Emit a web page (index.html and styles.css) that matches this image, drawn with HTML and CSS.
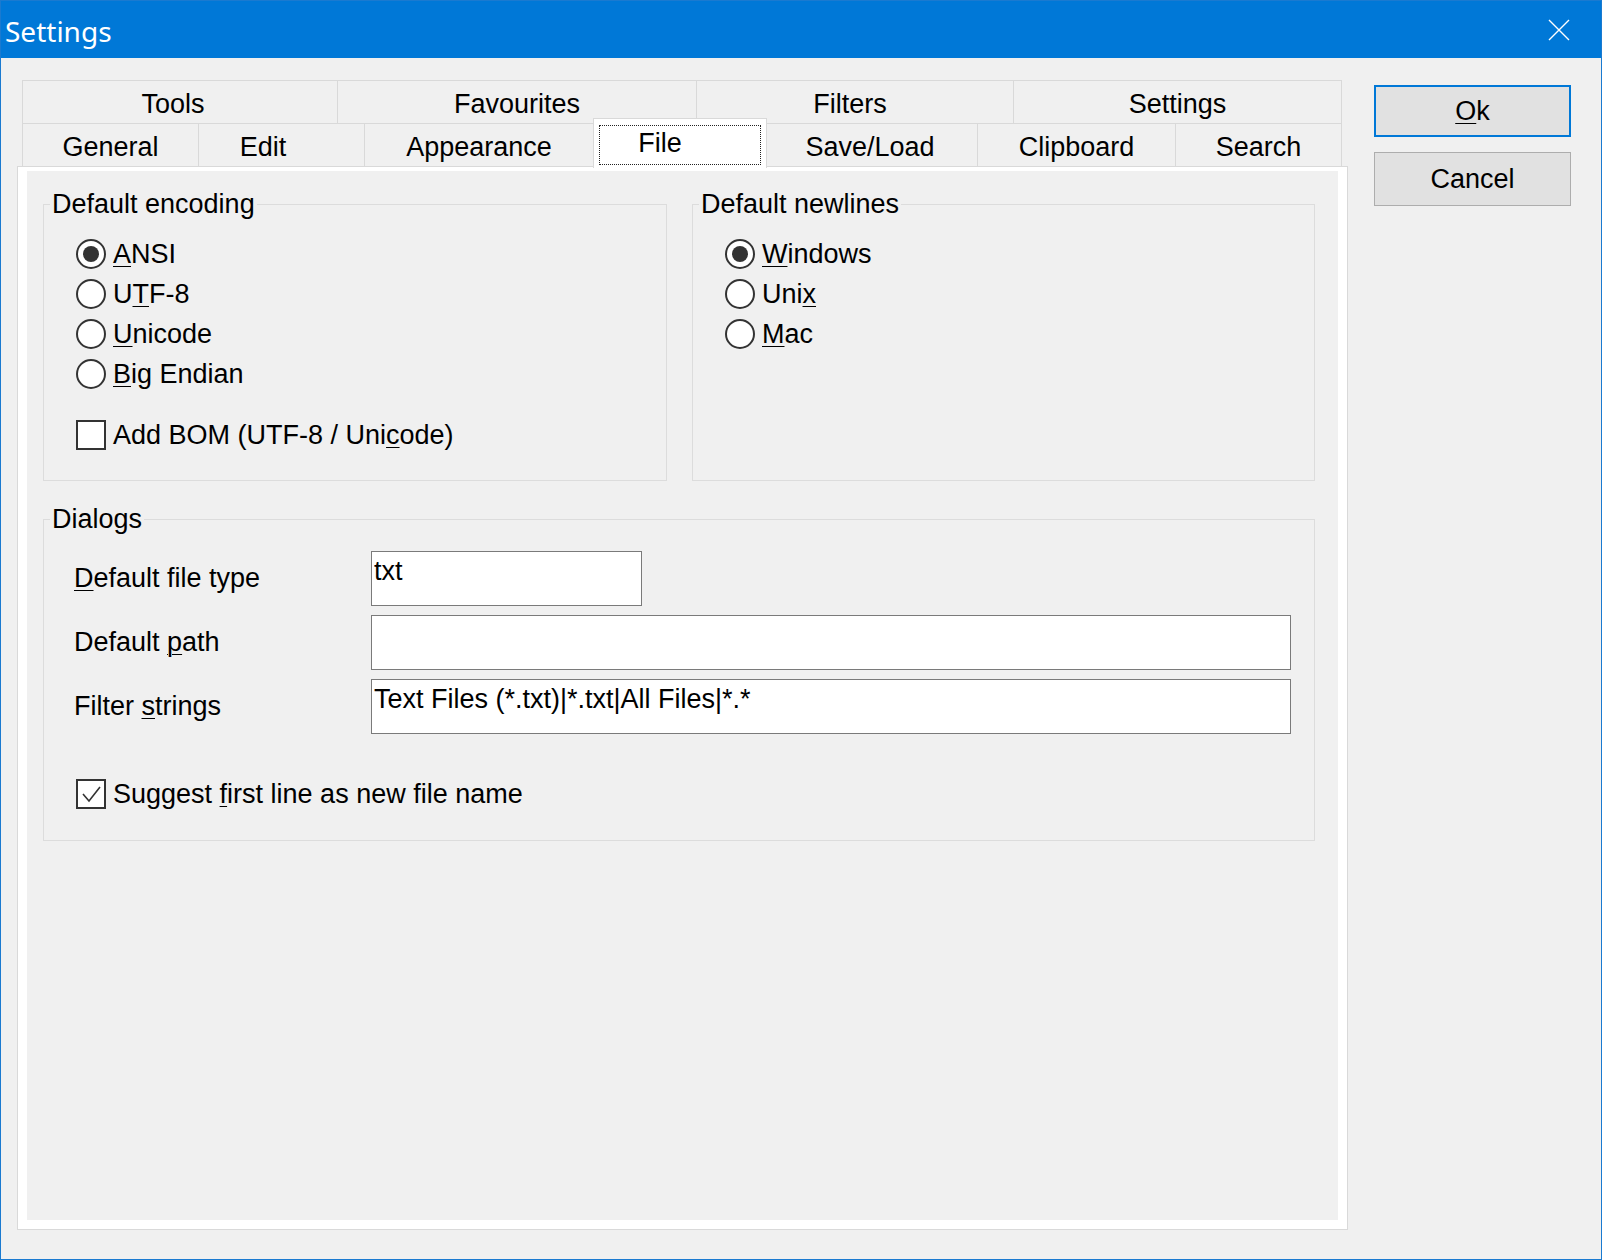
FILE: index.html
```html
<!DOCTYPE html>
<html>
<head>
<title>Settings</title>
<link rel="stylesheet" href="styles.css">
</head>
<body>
<div class="window">
  <div class="titlebar">
    <span class="title">Settings</span>
    <svg class="close-x" width="22" height="22" viewBox="0 0 22 22"><path d="M1 1 L21 21 M21 1 L1 21" stroke="#fff" stroke-width="1.4" fill="none"/></svg>
  </div>

  <div class="client">
    <div class="tabctl">
      <div class="tab-head">
        <div class="tab-row">
          <div class="tab first t-tools">Tools</div>
          <div class="tab t-fav">Favourites</div>
          <div class="tab t-filters">Filters</div>
          <div class="tab t-settings">Settings</div>
        </div>
        <div class="tab-row">
          <div class="tab first t-general">General</div>
          <div class="tab t-edit">Edit</div>
          <div class="tab t-appearance">Appearance</div>
          <div class="tab active t-file"><span class="focus">File</span></div>
          <div class="tab t-saveload">Save/Load</div>
          <div class="tab t-clipboard">Clipboard</div>
          <div class="tab t-search">Search</div>
        </div>
      </div>

      <div class="tab-body">
        <div class="page">
          <div class="group-row">
            <fieldset class="group encoding">
              <legend>Default encoding</legend>
              <div class="opt"><span class="radio on"></span><span><u>A</u>NSI</span></div>
              <div class="opt"><span class="radio"></span><span>U<u>T</u>F-8</span></div>
              <div class="opt"><span class="radio"></span><span><u>U</u>nicode</span></div>
              <div class="opt"><span class="radio"></span><span><u>B</u>ig Endian</span></div>
              <div class="opt bom"><span class="check"></span><span>Add BOM (UTF-8 / Uni<u>c</u>ode)</span></div>
            </fieldset>
            <fieldset class="group newlines">
              <legend>Default newlines</legend>
              <div class="opt"><span class="radio on"></span><span><u>W</u>indows</span></div>
              <div class="opt"><span class="radio"></span><span>Uni<u>x</u></span></div>
              <div class="opt"><span class="radio"></span><span><u>M</u>ac</span></div>
            </fieldset>
          </div>

          <fieldset class="group dialogs">
            <legend>Dialogs</legend>
            <div class="field">
              <label><u>D</u>efault file type</label>
              <input class="short" type="text" value="txt">
            </div>
            <div class="field">
              <label>Default <u>p</u>ath</label>
              <input type="text" value="">
            </div>
            <div class="field">
              <label>Filter <u>s</u>trings</label>
              <input type="text" value="Text Files (*.txt)|*.txt|All Files|*.*">
            </div>
            <div class="opt suggest">
              <span class="check">
                <svg width="26" height="26" viewBox="0 0 26 26"><path d="M5 13 L11 20 L22 6" stroke="#333" stroke-width="1.6" fill="none"/></svg>
              </span>
              <span>Suggest <u>f</u>irst line as new file name</span>
            </div>
          </fieldset>
        </div>
      </div>
    </div>

    <div class="buttons">
      <button class="bttn default" type="button"><u>O</u>k</button>
      <button class="bttn cancel" type="button">Cancel</button>
    </div>
  </div>
</div>
</body>
</html>
```

FILE: styles.css
```css
html,body{margin:0;padding:0;}
body{font-family:"Liberation Sans",Arial,sans-serif;font-size:27px;color:#000;background:#f0f0f0;}
u{text-decoration-thickness:1px;text-underline-offset:3px;}

.window{width:1602px;height:1260px;box-sizing:border-box;border:1px solid #1a7ad0;background:#f0f0f0;display:flex;flex-direction:column;}

/* title bar */
.titlebar{height:57px;background:#0078d7;display:flex;align-items:center;justify-content:space-between;}
.title{font-family:"Noto Sans","Open Sans",sans-serif;font-size:28px;color:#fff;padding:3px 0 0 4px;}
.close-x{margin-right:31px;}

.client{flex:1;display:flex;padding:0 0 0 16px;}

/* tab control */
.tabctl{width:1331px;margin-top:22px;display:flex;flex-direction:column;}
.tab-head{margin-left:5px;width:1320px;}
.tab-row{display:flex;height:43px;}
.tab{box-sizing:border-box;height:43px;border-top:1px solid #d9d9d9;border-right:1px solid #d9d9d9;display:flex;align-items:center;justify-content:center;padding-top:4px;background:#f0f0f0;}
.tab.first{border-left:1px solid #d9d9d9;}
.tab.active{position:relative;z-index:1;background:#fff;margin-top:-5px;height:50px;padding:0;border-left:1px solid #d9d9d9;margin-left:-1px;}
.tab.active .focus{align-self:stretch;flex:1;margin:6px 5px 3px;border:1px dotted #222;display:flex;align-items:center;justify-content:center;padding:0 40px 4px 0;}

.t-tools{width:316px;padding-right:14px;}
.t-fav{width:359px;}
.t-filters{width:317px;padding-right:10px;}
.t-settings{width:328px;}
.t-general{width:177px;}
.t-edit{width:166px;padding-right:37px;}
.t-appearance{width:229px;}
.t-file{width:174px;}
.t-saveload{width:211px;padding-right:4px;}
.t-clipboard{width:198px;}
.t-search{width:166px;}

.tab-body{flex:1;margin-bottom:29px;border:1px solid #d9d9d9;background:#fff;padding:4px 9px 9px 9px;display:flex;}
.page{flex:1;background:#f0f0f0;padding:18px 0 0 16px;}

/* group boxes */
.group-row{display:flex;width:1272px;gap:25px;}
.group{margin:0;border:1px solid #dcdcdc;padding:15px 0 25px 32px;min-width:0;}
.group legend{padding:0 2px;margin-left:-26px;line-height:30px;}
.encoding{width:624px;box-sizing:border-box;}
.newlines{flex:1;}

.opt{display:flex;align-items:center;height:40px;gap:7px;}
.opt.bom{margin-top:21px;}
.radio{width:30px;height:30px;box-sizing:border-box;border:2px solid #333;border-radius:50%;background:#fff;display:flex;align-items:center;justify-content:center;}
.radio.on::after{content:"";width:16px;height:16px;border-radius:50%;background:#333;}
.check{width:30px;height:30px;box-sizing:border-box;border:2px solid #333;background:#fff;display:flex;align-items:center;justify-content:center;}

.dialogs{width:1272px;box-sizing:border-box;margin-top:23px;padding:17px 23px 26px 32px;}
.field{display:flex;align-items:center;margin-bottom:9px;}
.field label{width:297px;margin-left:-2px;}
.field input{flex:1;box-sizing:border-box;height:55px;border:1px solid #7a7a7a;background:#fff;font:inherit;padding:4px 2px 19px;margin:0;outline:none;}
.field input.short{flex:none;width:271px;}
.opt.suggest{margin-top:40px;}

/* buttons */
.buttons{margin:27px 0 0 26px;width:197px;display:flex;flex-direction:column;gap:15px;}
.bttn{font:inherit;height:52px;background:#e1e1e1;border:1px solid #adadad;margin:0;padding:0;color:#000;}
.bttn.cancel{height:54px;}
.bttn.default{border:2px solid #0078d7;}
```
